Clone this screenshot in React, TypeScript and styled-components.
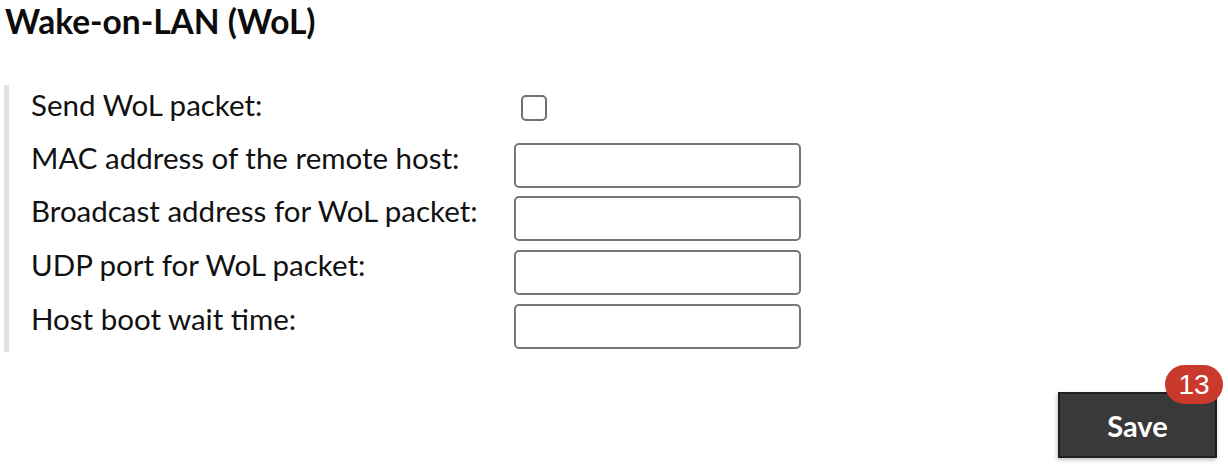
import React from "react";
import styled, { createGlobalStyle } from "styled-components";

const GlobalStyle = createGlobalStyle`
  html, body {
    margin: 0;
    padding: 0;
    background: #ffffff;
  }
  body {
    font-family: Lato, "Noto Sans", sans-serif;
    color: #111111;
  }
`;

const Page = styled.div`
  width: 1228px;
  height: 472px;
  display: flex;
  flex-direction: column;
  box-sizing: border-box;
`;

const Title = styled.h1`
  margin: 1px 0 0 5px;
  font-family: Lato, sans-serif;
  font-weight: 700;
  font-size: 33.5px;
  line-height: 40px;
  color: #0c0c0c;
`;

const Section = styled.div`
  margin: 44px 0 0 4px;
  border-left: 5px solid #e2e2e2;
  padding: 2px 0 0 22px;
  display: flex;
  flex-direction: column;
`;

const Row = styled.div<{ $h: number }>`
  display: flex;
  align-items: flex-start;
  height: ${(p) => p.$h}px;
`;

const Label = styled.label<{ $top: number }>`
  width: 483px;
  flex: none;
  margin-top: ${(p) => p.$top}px;
  font-size: 29.5px;
  line-height: 35px;
  color: #111;
`;

const Check = styled.input.attrs({ type: "checkbox" })`
  appearance: none;
  margin: 8px 0 0 7px;
  width: 26px;
  height: 26px;
  box-sizing: border-box;
  border: 2px solid #6f6f6f;
  border-radius: 5px;
  background: #fff;
`;

const Field = styled.input.attrs({ type: "text" })`
  margin: 5px 0 0 0;
  width: 287px;
  height: 45px;
  box-sizing: border-box;
  border: 2px solid #777777;
  border-radius: 5px;
  background: #fff;
  font-family: Lato, sans-serif;
  font-size: 20px;
  padding: 0 10px;
  outline: none;
`;

const Footer = styled.div`
  flex: 1;
  display: flex;
  justify-content: flex-end;
  align-items: flex-end;
  padding: 0 11px 14px 0;
`;

const SaveWrap = styled.div`
  position: relative;
`;

const SaveButton = styled.button`
  width: 159px;
  height: 66px;
  box-sizing: border-box;
  background: #393939;
  border: 2px solid #1f1f1f;
  color: #ffffff;
  font-family: Lato, sans-serif;
  font-weight: 700;
  font-size: 29px;
  padding: 0;
  box-shadow: -1px 2px 4px rgba(0, 0, 0, 0.25);
`;

const Badge = styled.span`
  position: absolute;
  top: -27px;
  right: -6px;
  min-width: 58px;
  height: 39px;
  box-sizing: border-box;
  padding: 0 10px;
  border-radius: 20px;
  background: #c9392c;
  color: #ffffff;
  font-family: "Liberation Sans", Arial, sans-serif;
  font-size: 28px;
  line-height: 39px;
  text-align: center;
`;

const rows = [
  "MAC address of the remote host:",
  "Broadcast address for WoL packet:",
  "UDP port for WoL packet:",
  "Host boot wait time:",
];

export default function App() {
  return (
    <>
      <GlobalStyle />
      <Page>
        <Title>Wake-on-LAN (WoL)</Title>
        <Section>
          <Row $h={50.5}>
            <Label $top={0}>Send WoL packet:</Label>
            <Check />
          </Row>
          {rows.map((r) => (
            <Row key={r} $h={53.7}>
              <Label $top={2}>{r}</Label>
              <Field />
            </Row>
          ))}
        </Section>
        <Footer>
          <SaveWrap>
            <SaveButton>Save</SaveButton>
            <Badge>13</Badge>
          </SaveWrap>
        </Footer>
      </Page>
    </>
  );
}
